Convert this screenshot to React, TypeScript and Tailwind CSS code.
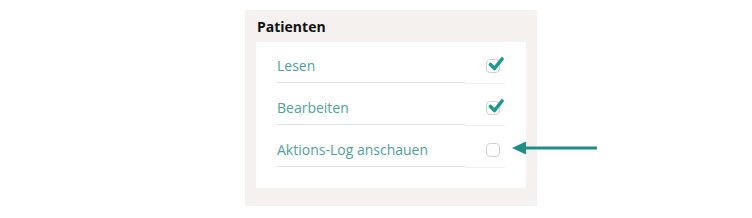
const ROWS = [
  { label: "Lesen", checked: true },
  { label: "Bearbeiten", checked: true },
  { label: "Aktions-Log anschauen", checked: false },
]

function Check({ checked }: { checked: boolean }) {
  return (
    <div className="relative size-[14px] rounded-[4px] border border-[#d2d2d2] bg-white">
      {checked && (
        <svg
          viewBox="0 0 16 16"
          className="absolute left-[1px] top-[-4px] size-[16px]"
        >
          <path
            d="M2.5 8.5 L6.5 12.5 L14 3"
            fill="none"
            stroke="#1f9a8f"
            strokeWidth="3.6"
            strokeLinecap="round"
            strokeLinejoin="round"
          />
        </svg>
      )}
    </div>
  )
}

export default function App() {
  return (
    <div
      className="h-[218px] w-[752px] bg-white pt-[10px]"
      style={{ fontFamily: '"Open Sans", "Noto Sans", sans-serif' }}
    >
      <div className="relative ml-[245px] w-[292px] bg-[#f4f1ee] px-[11px] pb-[18px] pt-[7px]">
        <h3 className="mb-[5px] pl-[1px] text-[14px] font-bold leading-[20px] text-[#111]">
          Patienten
        </h3>
        <div className="bg-white px-[21px] pb-[20px]">
          {ROWS.map((row) => (
            <div key={row.label} className="flex items-start">
              <div className="flex h-[41px] flex-1 items-end border-b border-[#e3e3e3] pb-[6px] text-[14px] leading-[20px] text-[#53a09c]">
                {row.label}
              </div>
              <div className="flex h-[42px] w-[40px] items-end justify-end border-b border-[#efefef] pb-[10px] pr-[5px]">
                <Check checked={row.checked} />
              </div>
            </div>
          ))}
        </div>
        <svg
          viewBox="0 0 86 14"
          className="absolute left-[267px] top-[131px] h-[14px] w-[86px]"
        >
          <path d="M12 5.5 H85 V8.5 H12 Z" fill="#1f8f86" />
          <path d="M0 7 L14 0.5 L14 13.5 Z" fill="#1f8f86" />
        </svg>
      </div>
    </div>
  )
}
